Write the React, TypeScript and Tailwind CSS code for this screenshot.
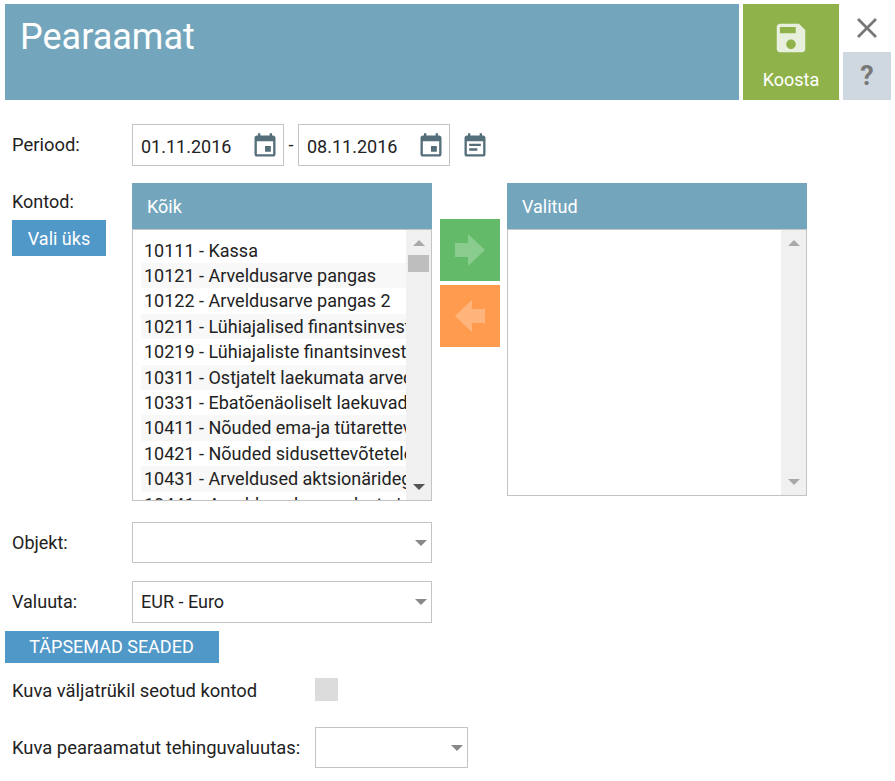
const accounts = [
  '10111 - Kassa',
  '10121 - Arveldusarve pangas',
  '10122 - Arveldusarve pangas 2',
  '10211 - Lühiajalised finantsinvesteeringud',
  '10219 - Lühiajaliste finantsinvesteeringute allahindlus',
  '10311 - Ostjatelt laekumata arved',
  '10331 - Ebatõenäoliselt laekuvad arved',
  '10411 - Nõuded ema-ja tütarettevõtetele',
  '10421 - Nõuded sidusettevõtetele',
  '10431 - Arveldused aktsionäridega',
  '10441 - Arveldused aruandvate isikutega',
];

function EventIcon({ className }: { className?: string }) {
  return (
    <svg viewBox="0 0 24 24" className={className} fill="currentColor">
      <path d="M17 12h-5v5h5v-5zM16 1v2H8V1H6v2H5c-1.11 0-1.99.9-1.99 2L3 19c0 1.1.89 2 2 2h14c1.1 0 2-.9 2-2V5c0-1.1-.9-2-2-2h-1V1h-2zm3 18H5V8h14v11z" />
    </svg>
  );
}

function NoteIcon({ className }: { className?: string }) {
  return (
    <svg viewBox="0 0 24 24" className={className} fill="currentColor">
      <path d="M17 10H7v2h10v-2zm2-7h-1V1h-2v2H8V1H6v2H5c-1.11 0-1.99.9-1.99 2L3 19c0 1.1.89 2 2 2h14c1.1 0 2-.9 2-2V5c0-1.1-.9-2-2-2zm0 16H5V8h14v11zm-5-5H7v2h7v-2z" />
    </svg>
  );
}

function SaveIcon({ className }: { className?: string }) {
  return (
    <svg viewBox="0 0 24 24" className={className} fill="currentColor">
      <path d="M17 3H5c-1.11 0-2 .9-2 2v14c0 1.1.89 2 2 2h14c1.1 0 2-.9 2-2V7l-4-4zm-5 16c-1.66 0-3-1.34-3-3s1.34-3 3-3 3 1.34 3 3-1.34 3-3 3zm3-10H5V5h10v4z" />
    </svg>
  );
}

function Caret({ up, className }: { up?: boolean; className?: string }) {
  return (
    <svg viewBox="0 0 12 6" className={`h-[6px] w-3 ${className ?? ''}`} fill="currentColor">
      <path d={up ? 'M0 6L6 0l6 6z' : 'M0 0h12L6 6z'} />
    </svg>
  );
}

function DateInput({ value }: { value: string }) {
  return (
    <div className="flex h-[42px] w-[152px] items-center justify-between border border-[#c4c4c4] pl-2 pr-[4px]">
      <span className="translate-y-[2px] text-[18px] leading-[42px]">{value}</span>
      <EventIcon className="h-7 w-7 translate-y-[1px] text-[#546e7a]" />
    </div>
  );
}

function Select({ value, className }: { value?: string; className: string }) {
  return (
    <div className={`flex items-center justify-between border border-[#c4c4c4] pl-2 pr-1 ${className}`}>
      <span>{value}</span>
      <Caret className="text-[#888888]" />
    </div>
  );
}

function ScrollBar({ thumb, dark }: { thumb?: boolean; dark?: boolean }) {
  return (
    <div className="flex w-[25px] flex-col items-center justify-between bg-[#f0f0f0] pb-[10px] pt-[10px]">
      <div className="flex flex-col items-center">
        <Caret up className="text-[#a9a9a9]" />
        {thumb && <div className="mt-[9px] h-[17px] w-[21px] bg-[#bebebe]" />}
      </div>
      <Caret className={dark ? 'text-[#555555]' : 'text-[#a9a9a9]'} />
    </div>
  );
}

export default function App() {
  return (
    <div
      className="h-[781px] w-[895px] overflow-hidden bg-white text-[18px] leading-6 text-[#222222]"
      style={{ fontFamily: 'Roboto, sans-serif' }}
    >
      <header className="flex gap-1 pl-[5px] pt-1">
        <div className="h-24 w-[734px] bg-[#73a6bc] pl-[15px] pt-[10px] text-[36px] leading-[46px] text-white">Pearaamat</div>
        <button className="flex h-24 w-24 flex-col items-center bg-[#8fb34a] pt-[15px] text-[18px] text-white">
          <SaveIcon className="h-[38px] w-[38px] text-[#e8efdc]" />
          <span className="mt-[11px]">Koosta</span>
        </button>
        <div className="flex w-12 flex-col">
          <div className="flex h-12 items-center justify-center text-[#777777]">
            <svg viewBox="0 0 20 20" className="h-5 w-5" fill="none" stroke="currentColor" strokeWidth="2.8">
              <path d="M1 1l18 18M19 1L1 19" />
            </svg>
          </div>
          <div className="flex h-12 items-center justify-center bg-[#cfd8e0] text-[27px] font-bold text-[#777777]">?</div>
        </div>
      </header>

      <main className="pl-3">
        <div className="mt-6 flex items-center">
          <label className="w-[120px] text-[18.4px]">Periood:</label>
          <DateInput value="01.11.2016" />
          <span className="w-[14px] text-center">-</span>
          <DateInput value="08.11.2016" />
          <NoteIcon className="ml-[11px] h-7 w-7 translate-y-[1px] text-[#546e7a]" />
        </div>

        <div className="mt-[17px] flex items-start">
          <div className="w-[120px]">
            <div className="pt-[7px] leading-6">Kontod:</div>
            <button className="mt-[6px] h-9 w-[94px] bg-[#5098c8] pt-[1px] text-white">Vali üks</button>
          </div>

          <div className="w-[300px]">
            <div className="flex h-[46px] items-center bg-[#73a6bc] pl-[15px] pt-[1px] text-white">Kõik</div>
            <div className="flex h-[272px] border border-[#c4c4c4]">
              <div className="min-w-0 flex-1 overflow-hidden pl-2 pt-[7.6px]">
                {accounts.map((a, i) => (
                  <div key={a} className={`h-[25.4px] whitespace-nowrap pl-[3px] leading-[25.4px] ${i % 2 ? 'bg-[#f8f8f8]' : ''}`}>
                    {a}
                  </div>
                ))}
              </div>
              <ScrollBar thumb dark />
            </div>
          </div>

          <div className="ml-2 mt-9 flex w-[60px] flex-col gap-1">
            <button className="h-[62px] bg-[#63ba68]">
              <svg viewBox="0 0 60 62" className="h-[62px] w-[60px]" fill="#ffffff" fillOpacity="0.25">
                <path d="M15 24h13v-9l17 16-17 16v-9H15z" />
              </svg>
            </button>
            <button className="h-[62px] bg-[#ff9b4f]">
              <svg viewBox="0 0 60 62" className="h-[62px] w-[60px]" fill="#ffffff" fillOpacity="0.25">
                <path d="M45 24H32v-9L15 31l17 16v-9h13z" />
              </svg>
            </button>
          </div>

          <div className="ml-[7px] w-[300px]">
            <div className="flex h-[46px] items-center bg-[#73a6bc] pl-[15px] pt-[1px] text-white">Valitud</div>
            <div className="flex h-[267px] justify-end border border-[#c4c4c4]">
              <ScrollBar />
            </div>
          </div>
        </div>

        <div className="mt-[21px] flex items-center">
          <label className="w-[120px]">Objekt:</label>
          <Select className="h-[41px] w-[300px]" />
        </div>

        <div className="mt-[18px] flex items-center">
          <label className="w-[120px]">Valuuta:</label>
          <Select value="EUR - Euro" className="h-[42px] w-[300px]" />
        </div>
      </main>

      <button className="ml-[5px] mt-2 block h-8 w-[214px] bg-[#5098c8] pr-[1px] text-white">TÄPSEMAD SEADED</button>

      <div className="pl-3">
        <div className="mt-[14px] flex items-center">
          <label className="w-[303px] translate-y-[2px] text-[18.4px]">Kuva väljatrükil seotud kontod</label>
          <div className="h-[23px] w-[23px] bg-[#dcdcdc]" />
        </div>
        <div className="mt-[26px] flex items-center">
          <label className="w-[303px] text-[18.4px]">Kuva pearaamatut tehinguvaluutas:</label>
          <Select className="h-[41px] w-[153px]" />
        </div>
      </div>
    </div>
  );
}
